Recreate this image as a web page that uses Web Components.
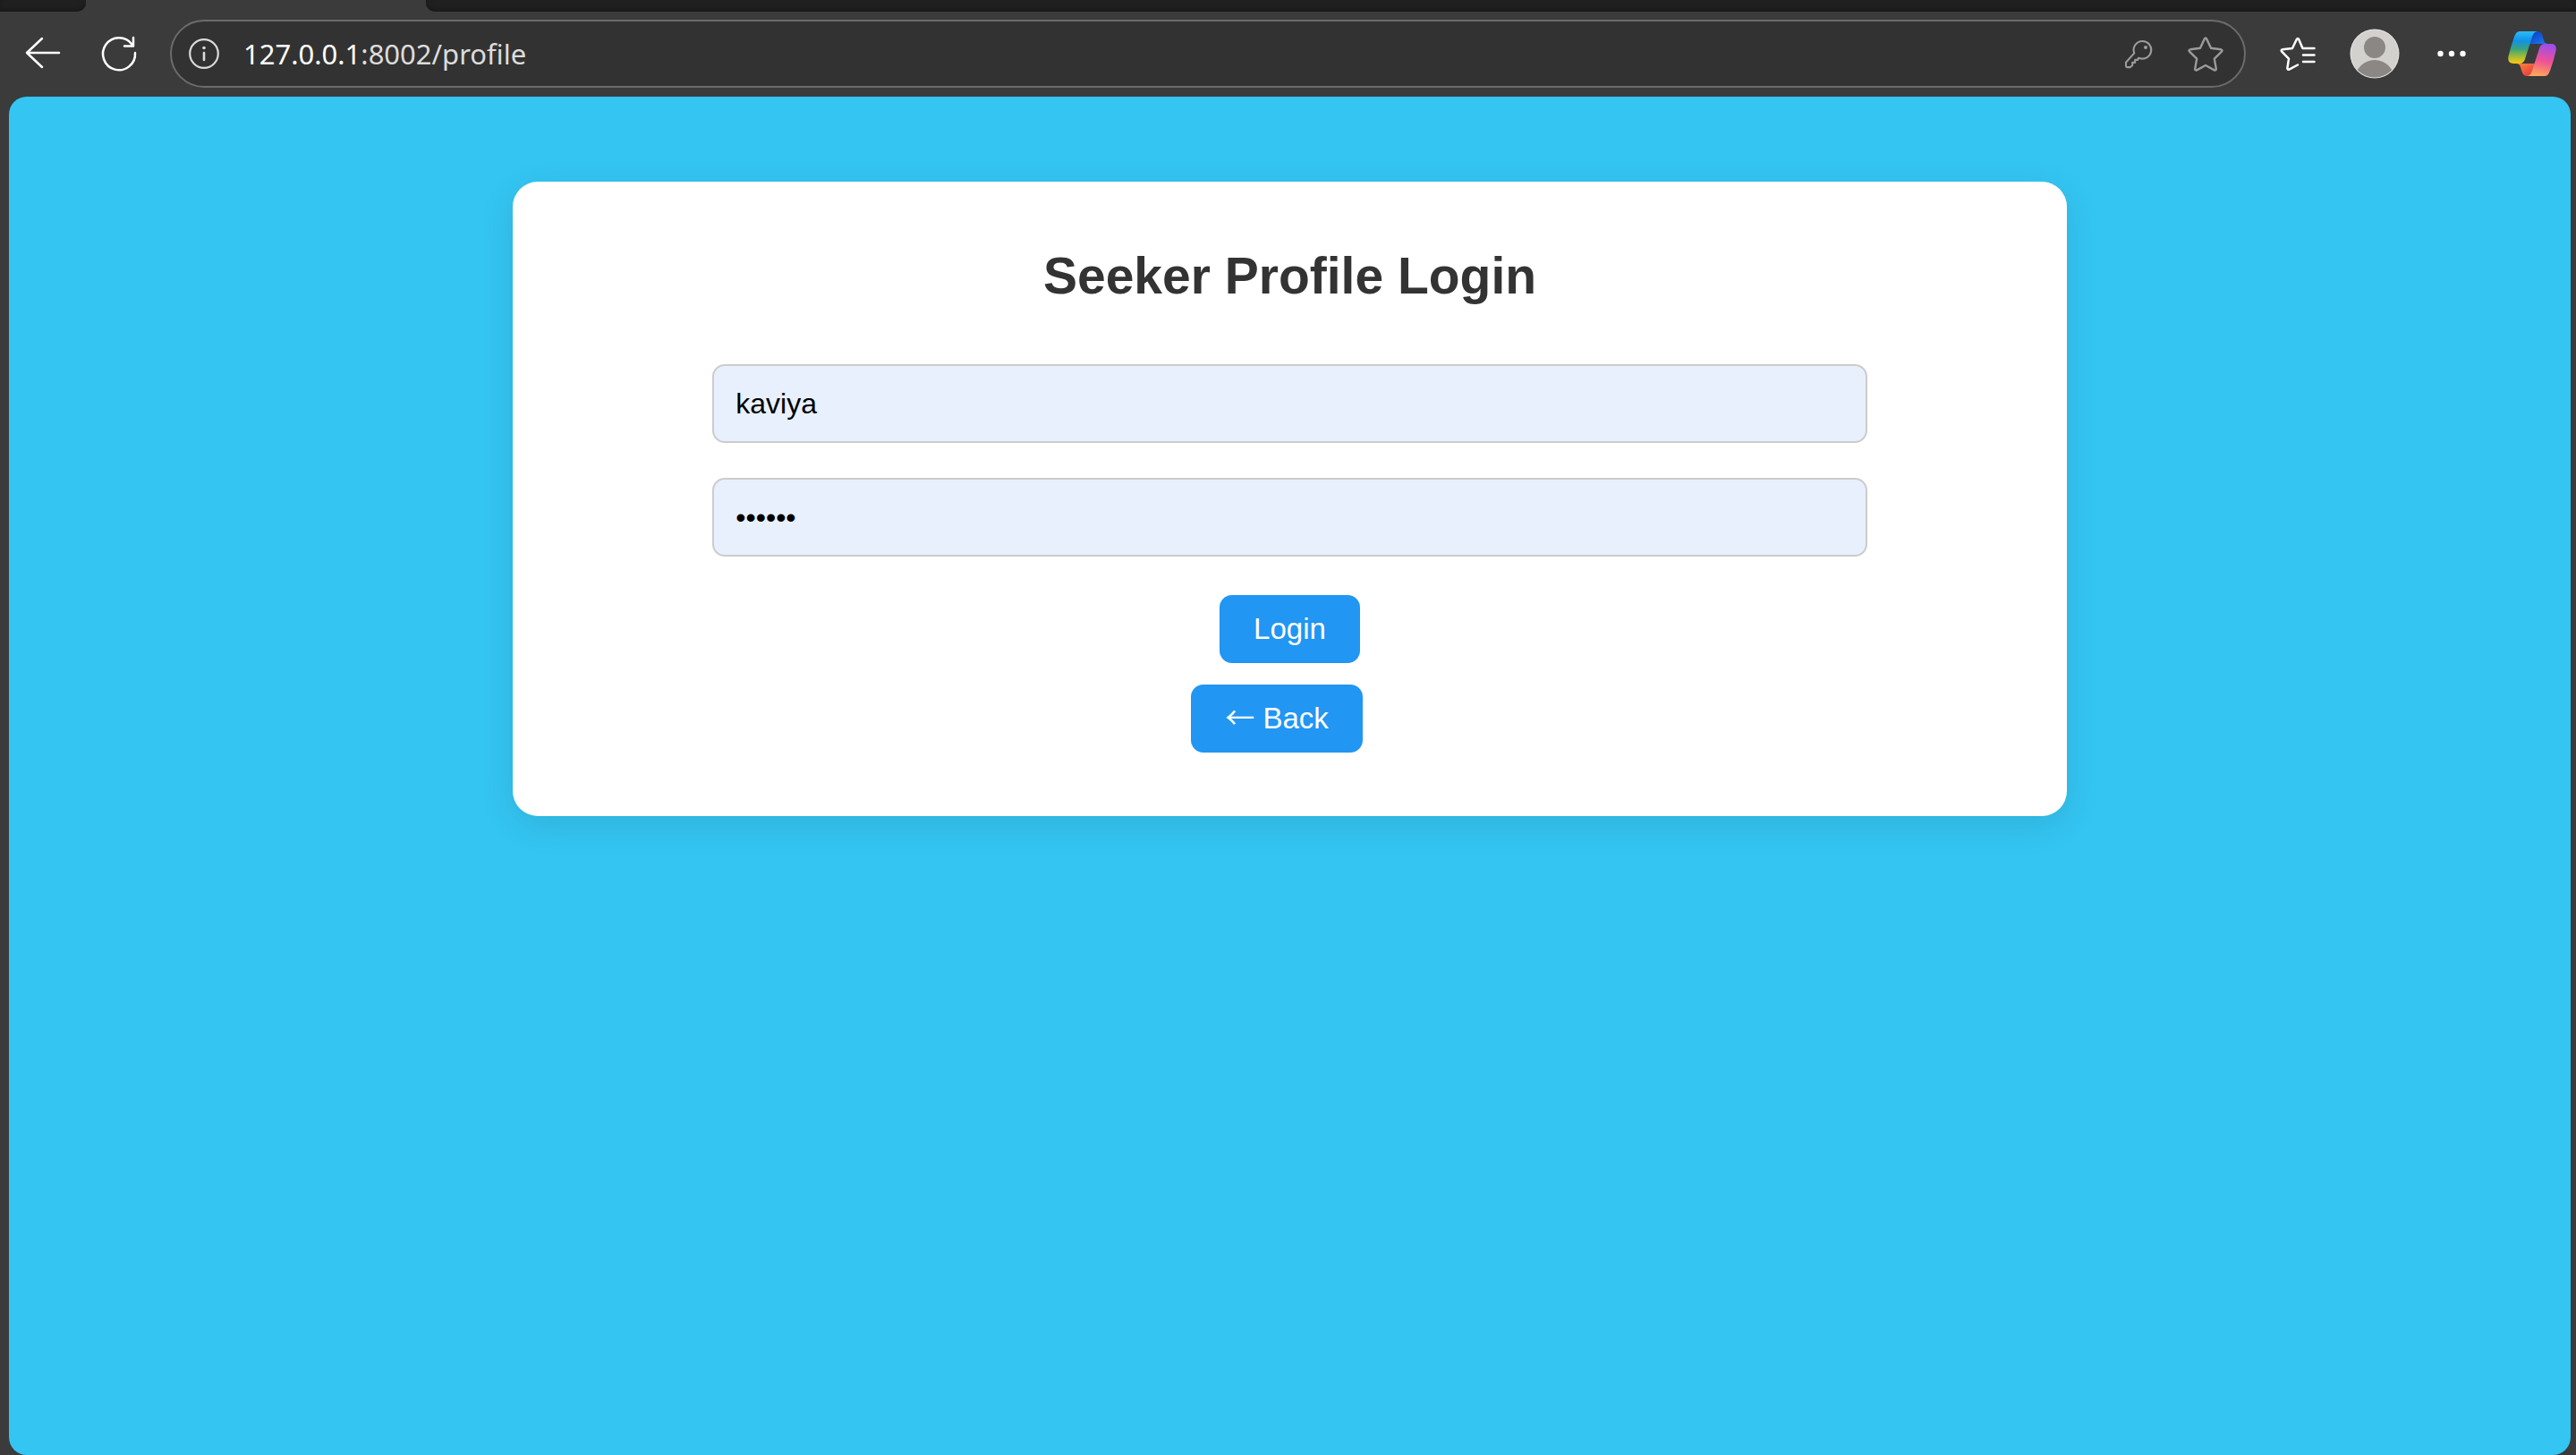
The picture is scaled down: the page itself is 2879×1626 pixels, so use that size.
<!DOCTYPE html>
<html lang="en">
<head>
<meta charset="utf-8">
<title>Seeker Profile Login</title>
<style>
html, body { margin: 0; height: 100%; }
body { background: #3b3b3b; font-family: "Liberation Sans", Arial, sans-serif; overflow: hidden; }
.arrow { font-family: "Noto Sans CJK JP", sans-serif; line-height: 1; }
</style>
</head>
<body>
<browser-window>
  <tab-strip slot="chrome"></tab-strip>
  <tool-bar slot="chrome"></tool-bar>
  <login-card heading="Seeker Profile Login">
    <form-field label="Username" type="text" value="kaviya"></form-field>
    <form-field label="Password" type="password" value="secret"></form-field>
    <action-button>Login</action-button>
    <action-button class="back"><span class="arrow">←</span> Back</action-button>
  </login-card>
</browser-window>
<script>
function define(name, html, setup) {
  const template = document.createElement('template');
  template.innerHTML = html;
  customElements.define(name, class extends HTMLElement {
    constructor() {
      super();
      this.attachShadow({ mode: 'open' }).append(template.content.cloneNode(true));
    }
    connectedCallback() { if (setup) setup(this, this.shadowRoot); }
  });
}

define('browser-window', `
<style>
:host { display: flex; flex-direction: column; height: 100vh; background: #3b3b3b; }
main { flex: 1; margin: 0 6px 0 10px; padding-top: 95px; box-sizing: border-box; background: #34c5f2; border-radius: 20px; overflow: hidden; }
</style>
<slot name="chrome"></slot>
<main><slot></slot></main>`);

define('tab-strip', `
<style>
:host { display: flex; justify-content: space-between; height: 13px; }
div { background: #202020; box-shadow: inset 0 -3px 4px #1a1a1a; }
.before { width: 96px; border-bottom-right-radius: 10px; }
.after { width: calc(100% - 476px); border-bottom-left-radius: 10px; }
</style>
<div class="before"></div><div class="after"></div>`);

define('icon-button', `
<style>
:host { display: flex; }
button { display: flex; padding: 0; border: 0; background: none; color: inherit; }
::slotted(svg) { display: block; }
</style>
<button><slot></slot></button>`, (host, root) => {
  root.querySelector('button').setAttribute('aria-label', host.getAttribute('label'));
});

define('address-bar', `
<style>
:host { display: flex; align-items: center; box-sizing: border-box; height: 76px; padding: 0 22px 0 18px; border: 2px solid #6b6b6b; border-radius: 38px; background: #323232; color: #9b9b9b; }
.info { color: #dadada; margin-right: 26px; }
.url { flex: 1; font: 31px/44px "Noto Sans", sans-serif; color: #dcdcdc; }
.host { color: #fff; }
.key { margin-right: 36px; }
</style>
<icon-button class="info" label="Site information"><svg width="36" height="36" viewBox="0 0 36 36" fill="none" stroke="currentColor" stroke-width="2.2"><circle cx="18" cy="18" r="15.8"/><path d="M18 17v8" stroke-width="2.6" stroke-linecap="round"/><circle cx="18" cy="11.5" r="1.8" fill="currentColor" stroke="none"/></svg></icon-button>
<div class="url"><span class="host">127.0.0.1</span>:8002/profile</div>
<icon-button class="key" label="Passwords"><svg width="36" height="36" viewBox="0 0 36 36" fill="none" stroke="currentColor" stroke-width="2.1" stroke-linejoin="round"><path d="M22.500 4a9.800 9.800 0 1 1-2.800 19.200L18 22.800l-.8 2.100h-3v3h-3v3l-2.300 2.200H5.500Q4 33 4 31.500v-3.700L13.300 17.400A9.800 9.800 0 0 1 22.500 4z"/><circle cx="26" cy="11" r="2" fill="currentColor" stroke="none"/></svg></icon-button>
<icon-button label="Add to favorites"><svg width="42" height="42" viewBox="0 0 42 42" fill="none" stroke="currentColor" stroke-width="2.4" stroke-linejoin="round"><path d="M19.800 4.400q1.200-2 2.400 0l4.800 10.300 11.200 1.600q2.200.6.800 2.300l-8.200 8 2 11.300q0 2.200-2 1.500L21 34l-9.800 5.400q-2 .7-2-1.500l2-11.300-8.200-8q-1.400-1.700.8-2.300L15 14.700z"/></svg></icon-button>`);

define('tool-bar', `
<style>
:host { display: flex; align-items: center; height: 95px; padding-right: 22px; color: #fff; box-sizing: border-box; padding-bottom: 1px; }
.back { margin-left: 26px; }
.reload { margin: 0 35px 0 41px; }
address-bar { flex: 1; }
.favorites { margin: 0 37px; }
.menu { margin: 0 46px 0 41px; }
</style>
<icon-button class="back" label="Back"><svg width="44" height="44" viewBox="0 0 44 44" fill="none" stroke="currentColor" stroke-width="2.500" stroke-linecap="round" stroke-linejoin="round"><path d="M40 21H4M21 5 4 21l17 16"/></svg></icon-button>
<icon-button class="reload" label="Refresh"><svg width="44" height="44" viewBox="0 0 44 44" fill="none" stroke="currentColor" stroke-width="2.500" stroke-linecap="round" stroke-linejoin="round"><path d="M40 21a18 18 0 1 1-3.500-9.500M38 4v9.500h-10"/></svg></icon-button>
<address-bar></address-bar>
<icon-button class="favorites" label="Favorites"><svg width="42" height="42" viewBox="0 0 42 42" fill="none" stroke="currentColor" stroke-width="2.500" stroke-linecap="round" stroke-linejoin="round"><path d="M39.500 15H26.500L22.200 5q-1.200-2-2.400 0L15 15 4 16.300q-2.200.6-.8 2.300l7.800 8-1.600 10.500q0 2.200 2 1.500L21 33.500M27 22.500h12.500M27 30h12.500"/></svg></icon-button>
<icon-button label="Profile"><svg width="56" height="56" viewBox="0 0 56 56"><defs><clipPath id="face"><circle cx="28" cy="28" r="26.500"/></clipPath></defs><circle cx="28" cy="28" r="27.500" fill="#e4e3e1"/><circle cx="28" cy="28" r="26.500" fill="#d2d1cd"/><g clip-path="url(#face)" fill="#8b8785"><circle cx="28" cy="21" r="12"/><circle cx="28" cy="57" r="22"/></g></svg></icon-button>
<icon-button class="menu" label="Settings and more"><svg width="34" height="34" viewBox="0 0 34 34" fill="currentColor"><circle cx="4.500" cy="17" r="3.200"/><circle cx="17" cy="17" r="3.200"/><circle cx="29.500" cy="17" r="3.200"/></svg></icon-button>
<icon-button label="Copilot"><svg width="54" height="50" viewBox="0 0 54 50">
<defs>
<linearGradient id="a" x1="0" y1="0" x2="0" y2="1"><stop offset="0" stop-color="#2bbcf8"/><stop offset=".3" stop-color="#1192e6"/><stop offset=".55" stop-color="#3aa37c"/><stop offset=".8" stop-color="#a8bd35"/><stop offset="1" stop-color="#fcc810"/></linearGradient>
<linearGradient id="b" x1="0" y1="0" x2="1" y2="1"><stop offset="0" stop-color="#0a3ac0"/><stop offset="1" stop-color="#1f7cf0"/></linearGradient>
<linearGradient id="c" x1=".5" y1="0" x2=".3" y2="1"><stop offset="0" stop-color="#a04de8"/><stop offset=".5" stop-color="#ef5294"/><stop offset="1" stop-color="#ffab55"/></linearGradient>
<linearGradient id="d" x1="0" y1="0" x2="1" y2="1"><stop offset="0" stop-color="#ff8a3c"/><stop offset="1" stop-color="#e0313f"/></linearGradient>
</defs>
<path d="M28 0h5q4 0 5.500 5l1.500 5q1 4 5 4H24z" fill="url(#b)"/>
<path d="M26 50h-5q-4 0-5.500-5L14 40q-1-4-5-4h21z" fill="url(#d)"/>
<path d="M13 0h20q-4 0-6 6l-8 25q-1.500 5-6 5H6q-7 0-5.500-8Q3 17 7 6q2-6 6-6z" fill="url(#a)"/>
<path d="M41 50H21q4 0 6-6l8-25q1.500-5 6-5h7q7 0 5.500 8Q51 33 47 44q-2 6-6 6z" fill="url(#c)"/>
</svg></icon-button>`);

define('login-card', `
<style>
:host { display: block; box-sizing: border-box; width: calc(60% + 20px); margin: 0 auto; padding: 72px 0 71px; background: #fff; border-radius: 28px; box-shadow: 0 10px 38px rgba(0, 0, 0, .1); }
h1 { margin: 0 0 66px; font-size: 57px; line-height: 66px; font-weight: bold; text-align: center; color: #333; }
form { display: flex; flex-direction: column; align-items: center; }
::slotted(form-field) { width: calc(75% - 13px); margin-bottom: 39px; }
::slotted(action-button) { margin-top: 4px; }
::slotted(.back) { margin: 24px 29px 0 0; }
</style>
<h1></h1>
<form onsubmit="return false"><slot></slot></form>`, (host, root) => {
  root.querySelector('h1').textContent = host.getAttribute('heading');
});

define('form-field', `
<style>
:host { display: block; }
label { display: block; }
input { display: block; box-sizing: border-box; width: 100%; height: 88px; padding: 0 24px; border: 2px solid #ccc; border-radius: 14px; background: #e8f0fe; color: #000; font: 32px "Liberation Sans", Arial, sans-serif; }
</style>
<label><input></label>`, (host, root) => {
  const input = root.querySelector('input');
  input.type = host.getAttribute('type');
  input.value = host.getAttribute('value');
  input.setAttribute('aria-label', host.getAttribute('label'));
});

define('action-button', `
<style>
:host { display: block; font: 33px "Liberation Sans", Arial, sans-serif; }
button { display: block; height: 76px; padding: 0 38px; border: 0; border-radius: 14px; background: #2196f3; color: #fff; font: inherit; }
</style>
<button type="button"><slot></slot></button>`);
</script>
</body>
</html>
